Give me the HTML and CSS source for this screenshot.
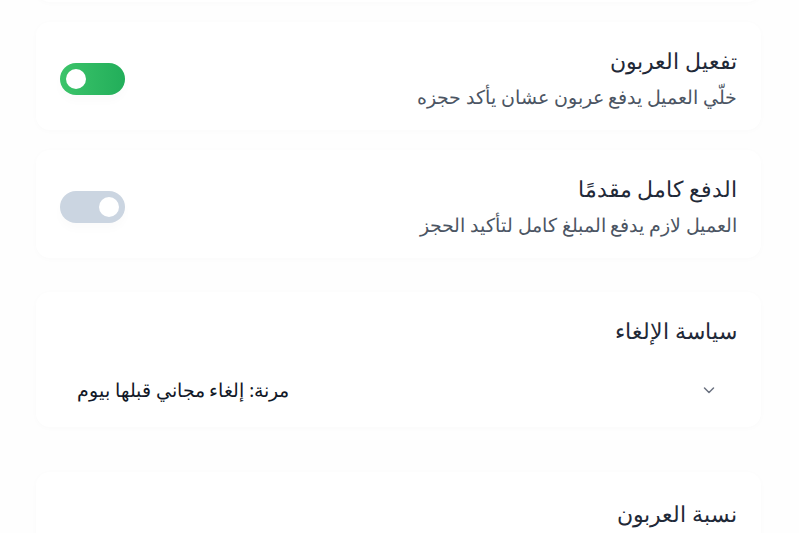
FILE: index.html
```html
<!DOCTYPE html>
<html lang="ar" dir="rtl">
<head>
  <meta charset="UTF-8">
  <meta name="viewport" content="width=device-width, initial-scale=1.0">
  <title>إعدادات الحجز</title>
  <link rel="stylesheet" href="styles.css">
</head>
<body>
  <div class="settings">
    <div class="card card-prev"></div>

    <!-- العربون -->
    <div class="card row">
      <div class="info">
        <h3>تفعيل العربون</h3>
        <p>خلّي العميل يدفع عربون عشان يأكد حجزه</p>
      </div>
      <button type="button" class="toggle on" onclick="this.classList.toggle('on')"><span class="knob"></span></button>
    </div>

    <!-- الدفع الكامل -->
    <div class="card row">
      <div class="info">
        <h3>الدفع كامل مقدمًا</h3>
        <p>العميل لازم يدفع المبلغ كامل لتأكيد الحجز</p>
      </div>
      <button type="button" class="toggle" onclick="this.classList.toggle('on')"><span class="knob"></span></button>
    </div>

    <!-- سياسة الإلغاء -->
    <div class="card field policy">
      <h3>سياسة الإلغاء</h3>
      <div class="select">
        <svg class="chevron" width="14" height="14" viewBox="0 0 14 14" fill="none">
          <path d="M2.5 5l4.5 4.5L11.5 5" stroke="#6b7280" stroke-width="1.5" stroke-linecap="round" stroke-linejoin="round"/>
        </svg>
        <span>مرنة: إلغاء مجاني قبلها بيوم</span>
      </div>
    </div>

    <!-- نسبة العربون -->
    <div class="card field percent">
      <h3>نسبة العربون</h3>
    </div>
  </div>
</body>
</html>
```

FILE: styles.css
```css
/* صفحة الإعدادات */
body {
  margin: 0;
  background-color: #fefefe;
  font-family: "Noto Sans", sans-serif;
  color: #1f2937;
  overflow: hidden;
}

.settings {
  display: flex;
  flex-direction: column;
  gap: 20px;
  padding: 0 38px 0 36px;
  margin-top: -38px;
}

.card {
  background-color: #ffffff;
  border-radius: 14px;
  box-shadow: 0 1px 6px rgba(15, 23, 42, 0.02);
  padding: 24px;
}

.card-prev {
  height: 40px;
  padding: 0;
}

.row {
  display: flex;
  justify-content: space-between;
  align-items: center;
  padding: 24px 24px 19px;
}

h3 {
  margin: 0;
  font-size: 22px;
  font-weight: 500;
  color: #1f2937;
  line-height: 28px;
}

.info p {
  margin: 9px 0 0;
  font-size: 18.5px;
  color: #4b5563;
  line-height: 28px;
}

/* الحقول */
.policy {
  margin-top: 14px;
  padding-bottom: 15px;
}

.percent {
  margin-top: 25px;
  padding-top: 27px;
}

/* مفتاح التبديل */
.toggle {
  width: 65px;
  height: 32px;
  border: none;
  border-radius: 16px;
  background-color: #cbd5e1;
  padding: 0 6px;
  display: flex;
  align-items: center;
  justify-content: flex-start;
  cursor: pointer;
  box-shadow: 0 6px 10px rgba(15, 23, 42, 0.02);
}

.toggle.on {
  background: linear-gradient(to left, #22ae5a, #3cc46a);
  justify-content: flex-end;
}

.knob {
  width: 20px;
  height: 20px;
  border-radius: 50%;
  background-color: #ffffff;
}

/* القائمة المنسدلة */
.select {
  margin-top: 24px;
  display: flex;
  justify-content: space-between;
  align-items: center;
  padding: 8px 21px 8px 17px;
  font-size: 18.5px;
  line-height: 28px;
  color: #111827;
}

.chevron {
  display: block;
}
```
